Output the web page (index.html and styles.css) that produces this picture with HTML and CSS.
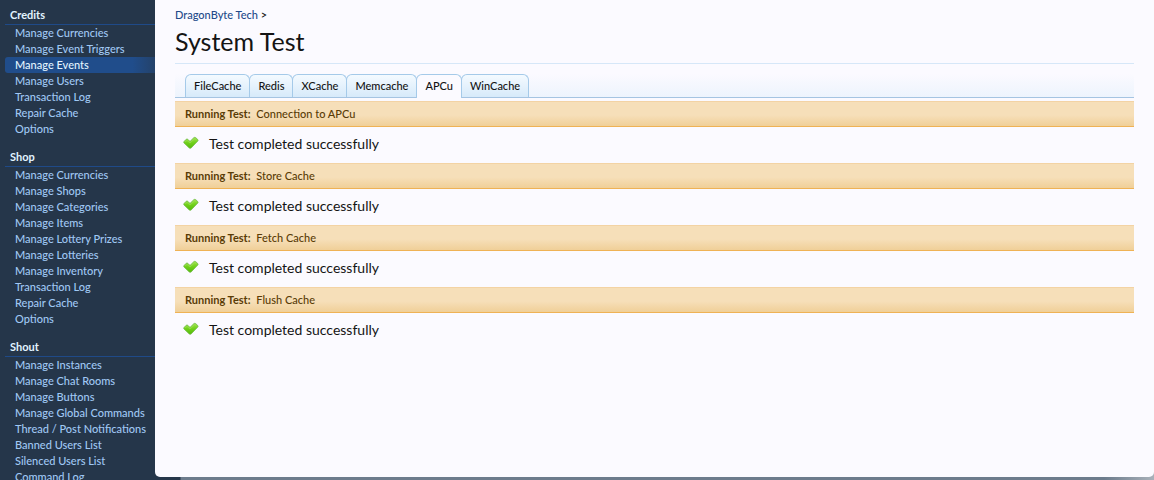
FILE: index.html
```
<!DOCTYPE html>
<html lang="en">
<head>
  <meta charset="UTF-8">
  <meta name="viewport" content="width=device-width, initial-scale=1.0">
  <title>System Test</title>
  <link rel="stylesheet" href="styles.css">
</head>
<body>
<svg width="0" height="0" class="sprite" aria-hidden="true">
  <defs>
    <linearGradient id="tickFill" x1="0" y1="0" x2="0" y2="1">
      <stop offset="0" stop-color="#9be04a"/>
      <stop offset="0.5" stop-color="#6fd01a"/>
      <stop offset="1" stop-color="#56b90c"/>
    </linearGradient>
    <symbol id="tick" viewBox="0 0 16 14">
      <path d="M1 5.6 L3 3.4 Q4 2.6 5 3.4 L7 5.4 L10.8 1.7 Q11.8 0.9 12.8 1.7 L14.8 3.6 Q15.4 4.3 14.8 5 L8.2 11.9 Q7.2 12.7 6.2 11.9 L1 7 Q0.4 6.3 1 5.6 Z" fill="url(#tickFill)" stroke="#74bd4c" stroke-width="0.8"/>
      <path d="M2.2 5.8 L4 4.4 L7 7 L11.8 2.6 L13.6 4" fill="none" stroke="#a4e45c" stroke-width="0.6"/>
    </symbol>
  </defs>
</svg>
<div class="page">
  <nav class="sidebar">
    <div class="section">
      <h2>Credits</h2>
      <ul>
        <li><a href="#">Manage Currencies</a></li>
        <li><a href="#">Manage Event Triggers</a></li>
        <li><a href="#" class="selected">Manage Events</a></li>
        <li><a href="#">Manage Users</a></li>
        <li><a href="#">Transaction Log</a></li>
        <li><a href="#">Repair Cache</a></li>
        <li><a href="#">Options</a></li>
      </ul>
    </div>
    <div class="section">
      <h2>Shop</h2>
      <ul>
        <li><a href="#">Manage Currencies</a></li>
        <li><a href="#">Manage Shops</a></li>
        <li><a href="#">Manage Categories</a></li>
        <li><a href="#">Manage Items</a></li>
        <li><a href="#">Manage Lottery Prizes</a></li>
        <li><a href="#">Manage Lotteries</a></li>
        <li><a href="#">Manage Inventory</a></li>
        <li><a href="#">Transaction Log</a></li>
        <li><a href="#">Repair Cache</a></li>
        <li><a href="#">Options</a></li>
      </ul>
    </div>
    <div class="section">
      <h2>Shout</h2>
      <ul>
        <li><a href="#">Manage Instances</a></li>
        <li><a href="#">Manage Chat Rooms</a></li>
        <li><a href="#">Manage Buttons</a></li>
        <li><a href="#">Manage Global Commands</a></li>
        <li><a href="#">Thread / Post Notifications</a></li>
        <li><a href="#">Banned Users List</a></li>
        <li><a href="#">Silenced Users List</a></li>
        <li><a href="#">Command Log</a></li>
      </ul>
    </div>
  </nav>
  <div class="body-pane">
    <main class="content">
      <div class="breadcrumb"><a href="#">DragonByte Tech</a> &gt;</div>
      <h1>System Test</h1>
      <ul class="tabs">
        <li><a href="#">FileCache</a></li>
        <li><a href="#">Redis</a></li>
        <li><a href="#">XCache</a></li>
        <li><a href="#">Memcache</a></li>
        <li><a href="#" class="active">APCu</a></li>
        <li><a href="#">WinCache</a></li>
      </ul>
      <h3 class="test-header"><b>Running Test:</b> Connection to APCu</h3>
      <p class="result"><svg class="tick"><use href="#tick"/></svg>Test completed successfully</p>
      <h3 class="test-header"><b>Running Test:</b> Store Cache</h3>
      <p class="result"><svg class="tick"><use href="#tick"/></svg>Test completed successfully</p>
      <h3 class="test-header"><b>Running Test:</b> Fetch Cache</h3>
      <p class="result"><svg class="tick"><use href="#tick"/></svg>Test completed successfully</p>
      <h3 class="test-header"><b>Running Test:</b> Flush Cache</h3>
      <p class="result"><svg class="tick"><use href="#tick"/></svg>Test completed successfully</p>
    </main>
  </div>
</div>
</body>
</html>
```
FILE: styles.css
```
* { box-sizing: border-box; }
body { margin: 0; background: #25364a; color: #141414; font-family: "Trebuchet MS", Lato, sans-serif; font-size: 11px; font-weight: 500; line-height: 16px; }
h1, h2, h3, ul, p { margin: 0; padding: 0; }
ul { list-style: none; }
a { text-decoration: none; }
.sprite { display: block; }
.page { display: flex; height: 100vh; overflow: hidden; }

/* sidebar */
.sidebar { flex: 0 0 155px; padding: 6px 0 0 5px; overflow: hidden; white-space: nowrap; }
.section { margin-bottom: 11px; }
.section h2 { padding-left: 5px; border-bottom: 1px solid #1f4a88; color: #e2f4ff; font-size: 11px; font-weight: bold; line-height: 18px; }
.section a { display: block; padding-left: 10px; border-radius: 3px 0 0 3px; color: #a0c8f4; }
.section a.selected { background: linear-gradient(to right, #204d8b 85%, #24426a); color: #e2f4ff; }

/* main area */
.body-pane { flex: 1; display: flex; min-width: 0; padding-bottom: 3px; background: linear-gradient(to right, #25364a 25px, #6c7b8c 26px, #6c7b8c 95%, #a9b1ba); }
.content { flex: 1; min-width: 0; padding: 7px 20px; border-radius: 0 0 5px 5px; background: #fbfaff; }
.breadcrumb a { color: #234a8a; }
h1 { padding-bottom: 4px; border-bottom: 1px solid #d6e7f8; font-size: 25px; font-weight: normal; line-height: 36px; }

.tabs { display: flex; margin-bottom: 3px; padding: 10px 10px 0; border-bottom: 1px solid #a5c4e2; background: linear-gradient(#fbfaff 30%, #edf4fd); }
.tabs li { margin-right: -1px; }
.tabs a { display: block; padding: 0 8px; border: 1px solid #a5cae9; border-bottom: 0; border-radius: 6px 6px 0 0; background: linear-gradient(#f4faff, #d7eafa); color: #141414; line-height: 22px; }
.tabs a.active { margin-bottom: -1px; padding-bottom: 1px; background: #fbfaff; }

.test-header { padding: 0 10px; border-top: 1px solid #f3d3a4; border-bottom: 1px solid #efb255; background: linear-gradient(#f6dfb9 55%, #f0cf98); color: #5a3c06; font-size: 11px; font-weight: 500; line-height: 24px; }
.test-header b { margin-right: 3px; }
.result { display: flex; align-items: center; gap: 10px; padding: 0 8px 3px; font-size: 14px; font-weight: normal; line-height: 33px; }
.tick { width: 16px; height: 14px; margin-bottom: 2px; }
```
